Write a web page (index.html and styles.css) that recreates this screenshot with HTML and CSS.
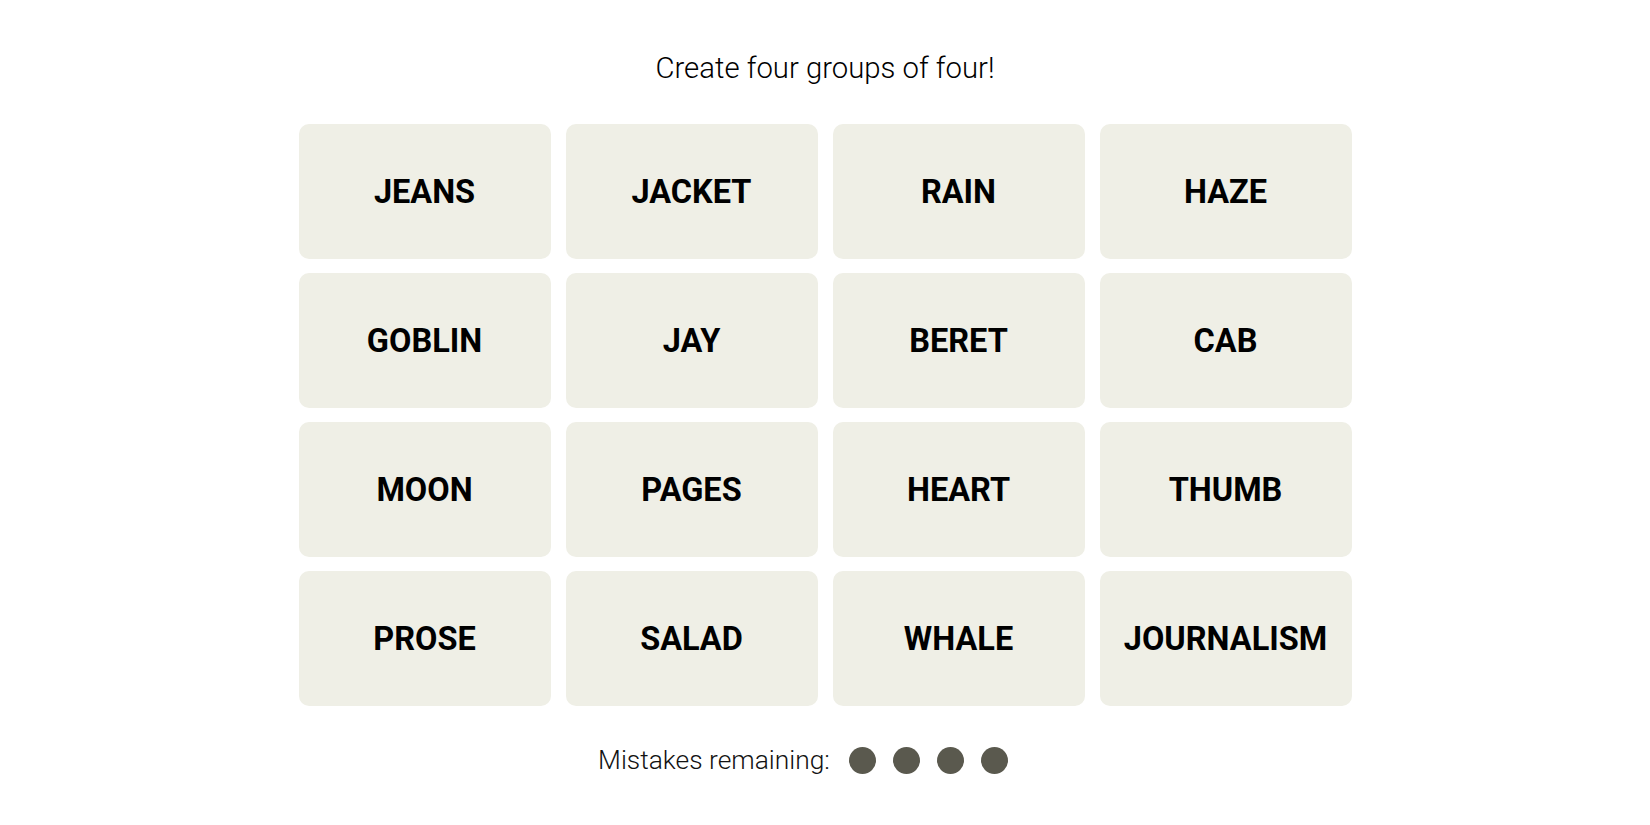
FILE: index.html
```html
<!DOCTYPE html>
<html lang="en">
<head>
<meta charset="utf-8">
<title>Connections</title>
<link rel="stylesheet" href="styles.css">
</head>
<body>
<main class="game">
  <h2 class="prompt">Create four groups of four!</h2>
  <div class="board">
    <button class="tile">JEANS</button>
    <button class="tile">JACKET</button>
    <button class="tile">RAIN</button>
    <button class="tile">HAZE</button>
    <button class="tile">GOBLIN</button>
    <button class="tile">JAY</button>
    <button class="tile">BERET</button>
    <button class="tile">CAB</button>
    <button class="tile">MOON</button>
    <button class="tile">PAGES</button>
    <button class="tile">HEART</button>
    <button class="tile">THUMB</button>
    <button class="tile">PROSE</button>
    <button class="tile">SALAD</button>
    <button class="tile">WHALE</button>
    <button class="tile">JOURNALISM</button>
  </div>
  <div class="mistakes">
    <span class="mistakes-label">Mistakes remaining:</span>
    <span class="dots">
      <span class="dot"></span>
      <span class="dot"></span>
      <span class="dot"></span>
      <span class="dot"></span>
    </span>
  </div>
</main>
</body>
</html>
```
FILE: styles.css
```css
* { box-sizing: border-box; }
html, body {
  margin: 0;
  padding: 0;
  background: #ffffff;
}
body {
  font-family: Roboto, "Liberation Sans", sans-serif;
  color: #000;
}
.game {
  display: flex;
  flex-direction: column;
  align-items: center;
}
.prompt {
  margin: 50px 0 0;
  font-size: 29.3px;
  line-height: 36px;
  font-weight: 300;
  color: #000;
}
.board {
  margin-top: 38px;
  display: grid;
  grid-template-columns: repeat(4, 252px);
  grid-auto-rows: 135px;
  column-gap: 15px;
  row-gap: 14px;
}
.tile {
  border: none;
  border-radius: 10px;
  background: #efefe6;
  font-family: Roboto, "Liberation Sans", sans-serif;
  font-weight: 700;
  font-size: 32.5px;
  color: #000;
  text-transform: uppercase;
  display: flex;
  align-items: center;
  justify-content: center;
  padding: 0;
}
.mistakes {
  margin-top: 40px;
  padding-right: 44px;
  display: flex;
  align-items: center;
  gap: 19px;
  height: 28px;
}
.mistakes-label {
  font-size: 26.4px;
  font-weight: 300;
  color: #121212;
}
.dots {
  display: flex;
  gap: 17px;
}
.dot {
  width: 27px;
  height: 27px;
  border-radius: 50%;
  background: #5a594e;
}
```
